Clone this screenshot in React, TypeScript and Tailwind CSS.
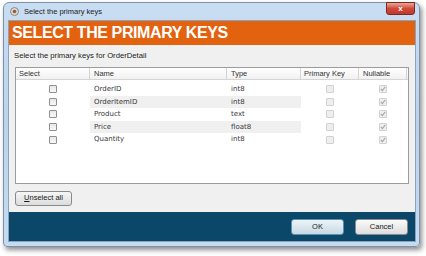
import React from "react";

const rows = [
	{ name: "OrderID", type: "int8" },
	{ name: "OrderItemID", type: "int8" },
	{ name: "Product", type: "text" },
	{ name: "Price", type: "float8" },
	{ name: "Quantity", type: "int8" },
];

const Box = ({ disabled, checked }: { disabled?: boolean; checked?: boolean }) => (
	<div
		className={
			"w-[8px] h-[8px] rounded-[1px] border flex items-center justify-center " +
			(disabled
				? "border-[#d2d2d2] bg-[#eeeeee]"
				: "border-[#8f8f8f] bg-gradient-to-b from-[#e8e8e8] to-[#f8f8f8]")
		}
	>
		{checked && (
			<svg width="6" height="6" viewBox="0 0 6 6">
				<path d="M0.8 3 L2.4 4.6 L5.2 0.8" stroke="#a8a8a8" strokeWidth="1.1" fill="none" />
			</svg>
		)}
	</div>
);

const App = () => {
	return (
		<div
			className="w-[426px] h-[256px] bg-white pt-[2px] pl-[3px] overflow-hidden"
			style={{ fontFamily: '"Liberation Sans", Arial, sans-serif' }}
		>
			<div className="w-[417px] h-[245px] rounded-t-[6px] rounded-b-[4px] border border-[#7d93ab] bg-gradient-to-b from-[#c9ddf2] via-[#bcd3ec] to-[#c6dbf1] shadow-[2px_3px_5px_rgba(0,0,0,0.45)] flex flex-col pl-[4px] pr-[3px] pb-[4px]">
				{/* title bar */}
				<div className="h-[17px] flex items-center relative">
					<svg width="9" height="9" viewBox="0 0 9 9" className="ml-[2px]">
						<circle cx="4.5" cy="4.5" r="4" fill="#d6d6d6" stroke="#7a7a7a" strokeWidth="0.8" />
						<circle cx="4.5" cy="4.5" r="1.8" fill="#a05a2a" />
					</svg>
					<span className="ml-[5px] text-[7.5px] text-[#1b1b1b]">Select the primary keys</span>
					<div className="absolute right-[1px] top-[-1px] w-[29px] h-[13px] rounded-b-[3px] border border-[#7b2a22] bg-gradient-to-b from-[#e8a597] via-[#cf4a3a] to-[#c0392b] flex items-center justify-center">
						<span className="text-white text-[8px] font-bold leading-none">x</span>
					</div>
				</div>
				{/* client */}
				<div className="flex-1 flex flex-col bg-[#f0f0f0] border border-[#8aa2ba]">
					<div className="h-[24px] bg-[#e2620f] flex items-center pl-[3px]">
						<span className="text-white font-bold text-[16px] tracking-[-0.4px] leading-none">
							SELECT THE PRIMARY KEYS
						</span>
					</div>
					<div className="h-[22px] flex items-center pl-[5px] text-[7.7px] text-[#1a1a1a]">
						Select the primary keys for OrderDetail
					</div>
					<div className="mx-[6px] h-[117px] border border-[#9c9c9c] bg-white flex flex-col text-[7.5px] text-[#333333]">
						<div className="h-[12px] flex border-b border-[#d5d5d5] bg-gradient-to-b from-white to-[#f1f1f1]">
							<div className="w-[74px] pl-[3px] flex items-center border-r border-[#d5d5d5]">Select</div>
							<div className="w-[137px] pl-[4px] flex items-center border-r border-[#d5d5d5]">Name</div>
							<div className="w-[74px] pl-[4px] flex items-center border-r border-[#d5d5d5]">Type</div>
							<div className="w-[58px] pl-[3px] flex items-center border-r border-[#d5d5d5]">Primary Key</div>
							<div className="w-[48px] pl-[4px] flex items-center border-r border-[#d5d5d5]">Nullable</div>
						</div>
						<div
							className="pt-[3px] flex flex-col text-[7px] text-[#3a3a3a]"
							style={{ fontFamily: '"DejaVu Sans", Verdana, sans-serif' }}
						>
							{rows.map((r, i) => (
								<div key={r.name} className="h-[12.6px] flex items-center">
									<div className="w-[74px] flex justify-center">
										<Box />
									</div>
									<div className={"w-[211px] h-full flex items-center " + (i % 2 === 1 ? "bg-[#f0f0f0]" : "")}>
										<div className="w-[137px] pl-[4px]">{r.name}</div>
										<div className="w-[74px] pl-[4px]">{r.type}</div>
									</div>
									<div className="w-[58px] flex justify-center">
										<Box disabled />
									</div>
									<div className="w-[48px] flex justify-center">
										<Box disabled checked />
									</div>
								</div>
							))}
						</div>
					</div>
					<div className="flex-1 flex items-center pl-[6px]">
						<button className="w-[57px] h-[15px] rounded-[3px] border border-[#8a8a8a] bg-gradient-to-b from-[#f6f6f6] to-[#dcdcdc] text-[7.5px] text-[#1a1a1a]">
							<span className="underline">U</span>nselect all
						</button>
					</div>
					<div className="h-[29px] bg-[#0b4768] flex items-center justify-end gap-[11px] pr-[7px]">
						<button className="w-[53px] h-[16px] rounded-[3px] border border-[#5d8fb3] bg-gradient-to-b from-[#eef4f8] to-[#c7d9e6] text-[7.5px] text-[#1a1a1a]">
							OK
						</button>
						<button className="w-[53px] h-[16px] rounded-[3px] border border-[#8a8a8a] bg-gradient-to-b from-[#fafafa] to-[#dddddd] text-[7.5px] text-[#1a1a1a]">
							Cancel
						</button>
					</div>
				</div>
			</div>
		</div>
	);
};

export default App;
